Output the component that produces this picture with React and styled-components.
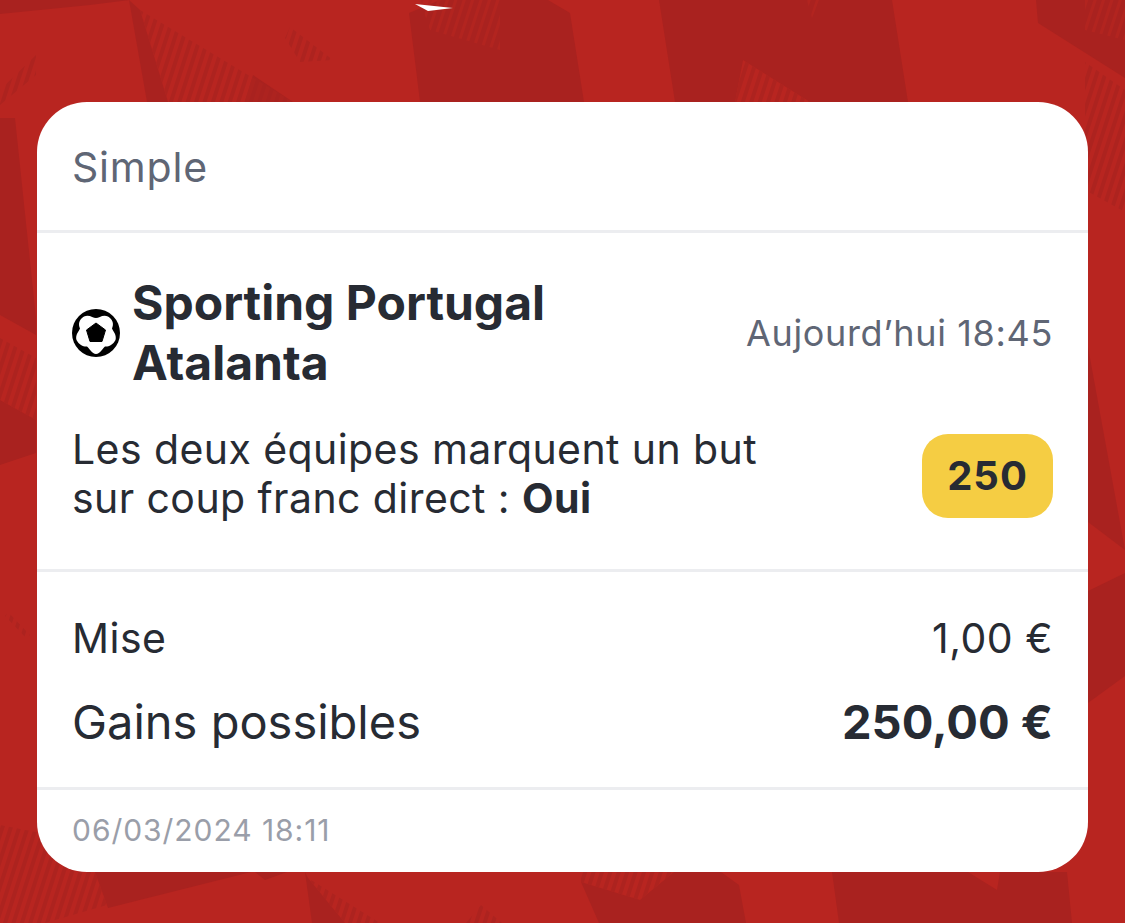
import React from 'react';
import styled, { createGlobalStyle } from 'styled-components';

const GlobalStyle = createGlobalStyle`
    html, body {
        margin: 0;
        padding: 0;
        background: #b82520;
    }
`;

const Page = styled.div`
    position: relative;
    width: 1125px;
    height: 923px;
    overflow: hidden;
    padding: 102px 37px 0;
    box-sizing: border-box;
    background: #b82520;
    font-family: Inter, "Liberation Sans", sans-serif;
`;

const Backdrop = styled.svg`
    position: absolute;
    inset: 0;
`;

const Card = styled.div`
    position: relative;
    width: 1051px;
    height: 770px;
    display: flex;
    flex-direction: column;
    background: #fff;
    border-radius: 50px;
    overflow: hidden;
`;

const Section = styled.div`
    height: ${(props) => props.$height}px;
    padding: ${(props) => props.$padding};
    box-sizing: border-box;
    border-bottom: ${(props) => (props.$last ? 'none' : '3px solid #ecedf0')};
    flex-shrink: 0;
`;

const CardLabel = styled.div`
    font-size: 41px;
    line-height: 44px;
    letter-spacing: 0.8px;
    color: #5f6675;
    margin-top: -1px;
`;

const MatchRow = styled.div`
    display: flex;
    align-items: center;
    justify-content: space-between;
`;

const MatchInfo = styled.div`
    display: flex;
    align-items: center;
    gap: 12px;
`;

const Teams = styled.div`
    font-size: 48px;
    line-height: 60px;
    font-weight: 700;
    color: #272b33;
`;

const MatchTime = styled.div`
    font-size: 36px;
    letter-spacing: 0.65px;
    color: #5f6675;
    margin-right: -1px;
`;

const BetRow = styled.div`
    display: flex;
    align-items: center;
    justify-content: space-between;
    margin-top: 32px;
`;

const BetText = styled.div`
    font-size: 41px;
    line-height: 49px;
    letter-spacing: 0.42px;
    color: #272b33;

    b {
        font-weight: 700;
    }
`;

const Odds = styled.div`
    width: 131px;
    height: 84px;
    margin: 3px -1px 0 0;
    display: flex;
    align-items: center;
    justify-content: center;
    background: #f5cd43;
    border-radius: 26px;
    font-size: 40px;
    font-weight: 700;
    letter-spacing: 1px;
    color: #272b33;
`;

const AmountRow = styled.div`
    display: flex;
    align-items: center;
    justify-content: space-between;
    color: #272b33;
    height: ${(props) => props.$height}px;
    margin: ${(props) => props.$gap || 0}px -1px 0 0;
    font-size: ${(props) => props.$size}px;
    letter-spacing: ${(props) => props.$tracking || 0}px;
`;

const StrongAmount = styled.span`
    font-size: 47px;
    font-weight: 700;
    letter-spacing: 0;
`;

const DateLine = styled.div`
    font-size: 30px;
    line-height: 34px;
    letter-spacing: 0.95px;
    color: #9a9ea9;
    margin-top: -1px;
`;

const darkShapes = [
    '0,0 130,0 90,5 0,14',
    '129,0 147,102 168,102 140,10',
    '253,75 293,102 245,102',
    '409,13 420,102 584,102 570,13 548,0 440,0',
    '659,0 892,0 908,102 810,102 743,60 735,102 675,102',
    '1036,0 1038,23 1125,78 1125,0',
    '15,118 0,118 0,315 36,335 36,318',
    '0,400 36,420 36,453 0,465',
    '1088,347 1125,550 1088,522',
    '1088,591 1125,573 1125,676 1088,703',
    '95,872 251,872 108,908',
    '255,872 287,872 265,880',
    '305,872 312,923 345,923 308,878',
    '581,882 599,923 746,923 739,885 721,872 674,872 640,900',
    '832,872 968,872 997,890 1000,872 1067,872 1072,923 839,923',
];

// patches of hatching, the same stripes as the big shapes fade out into
const stripedShapes = [
    '140,10 168,102 293,102',
    '0,90 36,55 36,75 0,105',
    '290,27 333,60 300,62 285,38',
    '0,338 36,358 36,420 0,400',
    '8,612 30,635 26,638 5,616',
    '1085,62 1125,90 1125,212 1085,190',
    '0,825 36,832 95,872 107,905 45,923 0,923',
    '308,878 345,923 380,923',
    '466,923 481,905 502,923',
    '581,872 674,872 640,900 581,882',
    '735,102 743,60 810,102',
];

const lightStripedShapes = ['420,0 500,0 500,50 430,30', '1085,0 1125,0 1125,40 1085,30', '807,0 819,0 812,18'];

const BackdropArt = () => (
    <Backdrop width="1125" height="923" viewBox="0 0 1125 923">
        <defs>
            <pattern id="hatch" width="8" height="10" patternUnits="userSpaceOnUse" patternTransform="rotate(18)">
                <rect width="4" height="10" fill="#ad231f" />
            </pattern>
            <pattern id="hatchLight" width="8" height="10" patternUnits="userSpaceOnUse" patternTransform="rotate(18)">
                <rect width="3" height="10" fill="#b2241f" />
            </pattern>
        </defs>
        <g fill="#a9221f">
            {darkShapes.map((points) => (
                <polygon key={points} points={points} />
            ))}
        </g>
        <g fill="url(#hatch)">
            {stripedShapes.map((points) => (
                <polygon key={points} points={points} />
            ))}
        </g>
        <g fill="url(#hatchLight)">
            {lightStripedShapes.map((points) => (
                <polygon key={points} points={points} />
            ))}
        </g>
        <polygon points="415,4 453,8 428,11" fill="#fff" />
    </Backdrop>
);

const BallIcon = () => (
    <svg width="48" height="48" viewBox="0 0 48 48" style={{ flexShrink: 0 }}>
        <circle cx="24" cy="24" r="24" fill="#000" />
        <path
            fill="#fff"
            d="M24 9C27 9 31 5 36 7.500C41 10.500 42 15 40 19.500C41 22 45 26 43.500 31C41 36 36 38 33 37.500C31 39 28 45 24 45C20 45 17 39 15 37.500C12 38 7 36 4.500 31C3 26 7 22 8 19.500C6 15 7 10.500 12 7.500C17 5 21 9 24 9Z"
        />
        <polygon points="24,14 33.500,21 30,32.500 18,32.500 14.500,21" fill="#000" stroke="#000" strokeWidth="1" strokeLinejoin="round" />
    </svg>
);

const App = () => (
    <>
        <GlobalStyle />
        <Page>
            <BackdropArt />
            <Card>
                <Section $height={131} $padding="44px 36px 0 35px">
                    <CardLabel>Simple</CardLabel>
                </Section>
                <Section $height={339} $padding="40px 36px 0 35px">
                    <MatchRow>
                        <MatchInfo>
                            <BallIcon />
                            <Teams>
                                Sporting Portugal
                                <br />
                                Atalanta
                            </Teams>
                        </MatchInfo>
                        <MatchTime>Aujourd’hui 18:45</MatchTime>
                    </MatchRow>
                    <BetRow>
                        <BetText>
                            Les deux équipes marquent un but
                            <br />
                            sur coup franc direct : <b>Oui</b>
                        </BetText>
                        <Odds>250</Odds>
                    </BetRow>
                </Section>
                <Section $height={218} $padding="41px 36px 0 35px">
                    <AmountRow $height={50} $size={41} $tracking={0.5}>
                        <span>Mise</span>
                        <span>1,00 €</span>
                    </AmountRow>
                    <AmountRow $height={70} $gap={23} $size={47}>
                        <span>Gains possibles</span>
                        <StrongAmount>250,00 €</StrongAmount>
                    </AmountRow>
                </Section>
                <Section $last $height={82} $padding="24px 36px 0 35px">
                    <DateLine>06/03/2024 18:11</DateLine>
                </Section>
            </Card>
        </Page>
    </>
);

export default App;
